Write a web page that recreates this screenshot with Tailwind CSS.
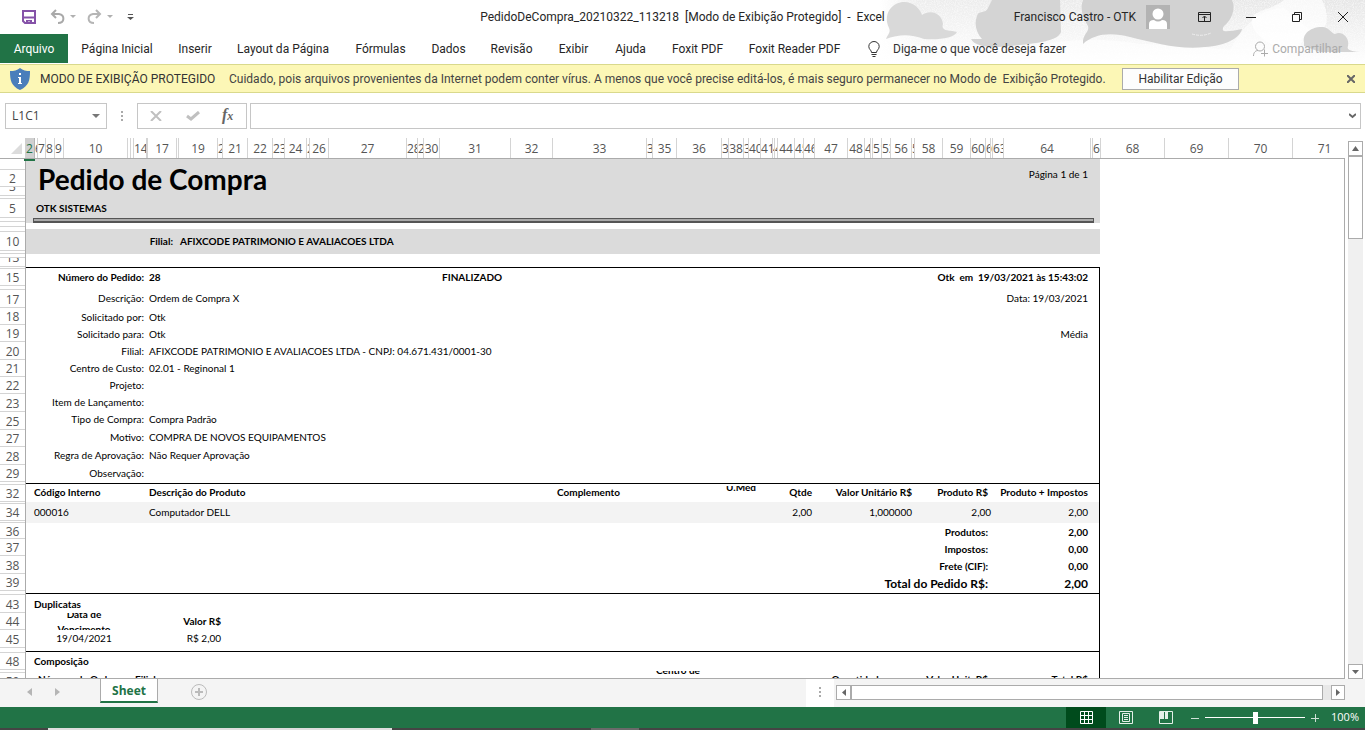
<!DOCTYPE html>
<html lang="pt-BR">
<head>
<meta charset="utf-8">
<title>PedidoDeCompra_20210322_113218 - Excel</title>
<script src="https://cdn.jsdelivr.net/npm/@tailwindcss/browser@4"></script>
</head>
<body class="h-screen overflow-hidden flex flex-col bg-white text-[#262626] text-xs font-['Open_Sans','Noto_Sans',sans-serif]">

<header class="relative shrink-0 h-16 font-['Roboto','Open_Sans',sans-serif]">
  <svg class="absolute right-0 top-0" width="485" height="64" viewBox="0 0 485 64" aria-hidden="true">
    <defs>
      <linearGradient id="fade" x1="0" x2="1"><stop offset="0" stop-color="#fff"/><stop offset=".08" stop-color="#ededed"/><stop offset="1" stop-color="#e6e6e6"/></linearGradient>
      <linearGradient id="down" x1="0" x2="0" y1="0" y2="1"><stop offset="0" stop-color="#fff" stop-opacity="0"/><stop offset="1" stop-color="#fff"/></linearGradient>
      <filter id="grain" x="0" y="0" width="1" height="1"><feTurbulence type="fractalNoise" baseFrequency=".9" numOctaves="2" seed="4"/><feColorMatrix values="0 0 0 0 1  0 0 0 0 1  0 0 0 0 1  2.500 0 0 0 -1"/></filter>
    </defs>
    <rect width="485" height="64" fill="url(#fade)"/>
    <rect width="485" height="64" fill="url(#down)"/>
    <path d="M40 64 Q90 34 150 48 Q200 34 260 44 Q300 44 350 50 Q372 8 404 8 L430 30 L400 64Z" fill="#fff" opacity=".5"/>
    <path d="M404 0 L442 0 C448 12 448 22 444 28 C430 34 420 40 418 52 C400 50 376 40 372 24 C370 8 390 12 404 0Z" fill="#fff" opacity=".7"/>
    <rect width="485" height="64" filter="url(#grain)" opacity=".6"/>
    <path d="M6 39 C8 34 11 32 9 28 C2 12 14 2 24 2 C34 2 40 9 42 15 C50 9 62 13 63 24 C60 32 72 30 77 32 C74 38 60 40 44 39 C30 34 20 34 6 39Z" fill="#d9d9d9"/>
    <path d="M97 16 C98 10 106 14 108 8 L112 0 L180 0 L181 32 C178 42 150 44 130 46 C110 49 94 46 91 39 L102 39 C96 32 94 24 97 16Z" fill="#d4d4d4"/>
    <path d="M203 0 L352 0 C356 8 352 20 344 26 C340 33 346 32 362 29 C360 38 345 46 325 47 C300 50 275 43 250 37 C230 32 214 34 203 44 C202 34 210 32 208 26 C202 16 200 8 203 0Z" fill="#d2d2d2"/>
    <path d="M312 34 Q322 37 331 33" fill="none" stroke="#eee" stroke-dasharray="3 1"/>
    <path d="M424 42 C422 32 434 26 443 27 C450 28 452 34 455 34 C462 30 470 38 468 46 C466 50 472 52 485 52 L440 52 L424 46Z" fill="#d4d4d4"/>
  </svg>

  <div class="relative h-[34px] flex items-center">
    <div class="flex-1 flex items-center h-8">
      <button class="ml-[21px]" aria-label="Salvar"><svg width="16" height="16" viewBox="0 0 16 16" fill="none"><path d="M2 2H14V14H4L2 12Z" stroke="#8552a8" stroke-width="2"/><path d="M2 8.5H14" stroke="#8552a8" stroke-width="2"/><path d="M5 11H11V15H9V12.500H7V15H5Z" fill="#8552a8"/></svg></button>
      <button class="ml-3" aria-label="Desfazer"><svg width="17" height="16" viewBox="0 0 17 16" fill="none" stroke="#a9a9a9" stroke-width="2"><path d="M7 1L3 5L7 9M3 5H10C16 6 16 14 9 14"/></svg></button>
      <svg class="ml-1" width="6" height="4" viewBox="0 0 6 4" aria-hidden="true"><path d="M0 0H6L3 3Z" fill="#b0b0b0"/></svg>
      <button class="ml-[10px]" aria-label="Refazer"><svg width="17" height="16" viewBox="0 0 17 16" fill="none" stroke="#b5b5b5" stroke-width="2"><path d="M10 1L14 5L10 9M14 5H7C1 6 1 14 8 14"/></svg></button>
      <svg class="ml-1" width="6" height="4" viewBox="0 0 6 4" aria-hidden="true"><path d="M0 0H6L3 3Z" fill="#b0b0b0"/></svg>
      <button class="ml-[14px]" aria-label="Personalizar Barra de Ferramentas"><svg width="7" height="8" viewBox="0 0 7 8"><path d="M1 1H6V2H1ZM0 4H7L3.500 7Z" fill="#555"/></svg></button>
    </div>
    <h1 class="whitespace-pre h-8 leading-8">PedidoDeCompra_20210322_113218  [Modo de Exibição Protegido]  -  Excel</h1>
    <div class="flex-1 flex items-center justify-end h-8">
      <span class="whitespace-nowrap">Francisco Castro - OTK</span>
      <svg class="ml-[10px]" width="24" height="24" viewBox="0 0 24 24" aria-hidden="true"><path d="M0 0H24V24H0Z" fill="#b3b3b3"/><circle cx="12" cy="9" r="5.500" fill="#fff"/><path d="M3 24V19Q3 15 8 15Q12 18 16 15Q21 15 21 19V24Z" fill="#fff"/></svg>
      <button class="ml-7" aria-label="Opções de Exibição da Faixa"><svg width="13" height="10" viewBox="0 0 13 10" fill="none" stroke="#222"><path d="M.5.5H12.500V9.500H.5ZM.5 2.500H12.500M6.500 9V4.500M4.500 6L6.500 4L8.500 6"/></svg></button>
      <button class="ml-[35px]" aria-label="Minimizar"><svg width="10" height="10" viewBox="0 0 10 10"><path d="M0 5.500H10" stroke="#222"/></svg></button>
      <button class="ml-9" aria-label="Restaurar"><svg width="10" height="10" viewBox="0 0 10 10" fill="none" stroke="#222"><path d="M.5 2.500H7.500V9.500H.5ZM2.500 2.500V.5H9.500V7.500H7.500"/></svg></button>
      <button class="ml-9 mr-[17px]" aria-label="Fechar"><svg width="10" height="10" viewBox="0 0 10 10" stroke="#222"><path d="M0 0L10 10M10 0L0 10"/></svg></button>
    </div>
  </div>

  <nav class="relative h-[29px] flex items-stretch whitespace-nowrap">
    <button class="w-[68px] bg-[#217346] text-white">Arquivo</button>
    <button class="w-[98px]">Página Inicial</button>
    <button class="w-[58px]">Inserir</button>
    <button class="w-[118px]">Layout da Página</button>
    <button class="w-[77px]">Fórmulas</button>
    <button class="w-[59px]">Dados</button>
    <button class="w-[67px]">Revisão</button>
    <button class="w-[57px]">Exibir</button>
    <button class="w-[57px]">Ajuda</button>
    <button class="w-[77px]">Foxit PDF</button>
    <button class="w-[117px]">Foxit Reader PDF</button>
    <label class="flex-1 flex items-center pl-[15px]">
      <svg width="12" height="16" viewBox="0 0 12 16" fill="none" stroke="#333"><path d="M3.500 11.500C3.500 9 .8 8.500.8 5.500A5.200 5 0 0 1 11.200 5.500C11.200 8.500 8.500 9 8.500 11.500ZM3.500 13.500H8.500M4.500 15.500H7.500"/></svg>
      <input class="ml-[13px] w-52 bg-transparent outline-none placeholder:text-[#333] placeholder:opacity-100" placeholder="Diga-me o que você deseja fazer" aria-label="Diga-me o que você deseja fazer">
    </label>
    <button class="flex items-center gap-1 pr-[23px] text-[#ababab]" disabled>
      <svg width="15" height="16" viewBox="0 0 15 16" fill="none" stroke="#ababab"><circle cx="7" cy="5.500" r="4.500"/><path d="M.5 15C.5 11 3 9.500 5 9.500M11.500 8.500V15.500M8 12.500H15"/></svg>
      Compartilhar
    </button>
  </nav>
</header>

<section class="shrink-0 h-[29px] flex items-center bg-[#fcf7b6] border-y border-[#d9d98c] text-[#444] whitespace-nowrap px-[10px] font-['Roboto','Open_Sans',sans-serif]">
  <svg width="20" height="22" viewBox="0 0 20 22" aria-hidden="true"><path d="M10 0C7 2.500 4 3 0 3C0 12 1 18 10 22C19 18 20 12 20 3C16 3 13 2.500 10 0Z" fill="#4a7ebb"/><path d="M9 5H11V7H9ZM8 9H11V15H12V16H8V15H9V10H8Z" fill="#fff"/></svg>
  <strong class="ml-[10px] w-[189px] font-normal text-[#333]">MODO DE EXIBIÇÃO PROTEGIDO</strong>
  <p class="w-[893px] whitespace-pre">Cuidado, pois arquivos provenientes da Internet podem conter vírus. A menos que você precise editá-los, é mais seguro permanecer no Modo de  Exibição Protegido.</p>
  <button class="w-[117px] h-[22px] bg-[#fdfdfd] border border-[#ababab] text-[#333]">Habilitar Edição</button>
  <button class="ml-auto" aria-label="Fechar aviso"><svg width="8" height="8" viewBox="0 0 8 8" stroke="#666" stroke-width="2"><path d="M0 0L8 8M8 0L0 8"/></svg></button>
</section>

<section class="shrink-0 h-[45px] flex items-center pl-[5px] pr-1">
  <div class="w-[102px] h-[26px] flex items-center border border-[#c6c6c6] pr-[6px]">
    <input class="w-full min-w-0 pl-[6px] outline-none text-[#444]" value="L1C1" aria-label="Caixa de nome">
    <svg class="shrink-0" width="8" height="4" viewBox="0 0 8 4" aria-hidden="true"><path d="M0 0H8L4 4Z" fill="#777"/></svg>
  </div>
  <svg class="ml-[14px]" width="2" height="10" viewBox="0 0 2 10" fill="#aaa" aria-hidden="true"><path d="M0 0H2V2H0ZM0 4H2V6H0ZM0 8H2V10H0Z"/></svg>
  <div class="ml-[14px] w-[110px] h-[26px] flex items-center border border-[#c6c6c6] px-3">
    <button aria-label="Cancelar"><svg width="12" height="10" viewBox="0 0 12 10" stroke="#c0c0c0" stroke-width="2"><path d="M1 0L11 10M11 0L1 10"/></svg></button>
    <button class="ml-6" aria-label="Inserir"><svg width="14" height="10" viewBox="0 0 14 10" fill="none" stroke="#c0c0c0" stroke-width="3"><path d="M1 5L5 8L13 1"/></svg></button>
    <button class="ml-[22px] font-['Liberation_Serif',serif] italic font-bold text-[#666] text-base leading-none" aria-label="Inserir Função"><i>f</i><i class="text-xs">x</i></button>
  </div>
  <div class="ml-[3px] flex-1 h-[26px] flex items-center border border-[#c6c6c6] pr-1">
    <input class="flex-1 min-w-0 bg-transparent outline-none" aria-label="Barra de fórmulas">
    <button aria-label="Expandir barra de fórmulas"><svg width="7" height="6" viewBox="0 0 7 6" fill="none" stroke="#666" stroke-width="2"><path d="M0 1L3.500 4L7 1"/></svg></button>
  </div>
</section>

<main class="flex-1 min-h-0 flex">
  <div class="flex-1 min-w-0 flex flex-col">
    <div class="shrink-0 h-[21px] flex border-b border-[#ababab]">
      <div class="w-[25px] shrink-0 flex justify-end items-end p-1 pr-[3px]"><svg width="11" height="11" viewBox="0 0 11 11" aria-hidden="true"><path d="M11 0V11H0Z" fill="#dcdcdc"/></svg></div>
      <div id="cols" class="flex-1 min-w-0 flex overflow-hidden border-l border-[#d0d0d0]"></div>
    </div>
    <div class="flex-1 min-h-0 flex overflow-hidden border-b border-[#ababab]">
      <div id="rows" class="w-[26px] shrink-0 border-r border-[#ababab]"></div>
      <div class="relative flex-1 min-w-0 text-[10px] text-black font-['Lato',sans-serif] whitespace-nowrap border-r border-[#ababab]">
        <i class="absolute -left-[2px] -top-[1px] w-[11px] h-[3px] bg-[#217346]"></i>
        <article class="w-[1074px]">
          <div class="h-16 bg-[#dbdbdb] flex flex-col">
            <div class="flex justify-between px-3">
              <h2 class="text-[28px] leading-10 font-bold">Pedido de Compra</h2>
              <span class="leading-[30px]">Página 1 de 1</span>
            </div>
            <div class="flex-1 pl-[10px] leading-[18px] font-bold">OTK SISTEMAS</div>
            <div class="h-[5px] shrink-0 ml-[7px] mr-[6px] border-t border-b-2 border-x border-[#555] bg-[#aaa]"></div>
          </div>
          <div class="mt-[6px] h-[25px] bg-[#dbdbdb] flex items-center font-bold"><span class="w-[147px] text-right">Filial:</span><span class="ml-[7px]">AFIXCODE PATRIMONIO E AVALIACOES LTDA</span></div>

          <div class="mt-[13px] border-t border-r border-black">
            <div class="h-5 flex items-center font-bold pr-[11px]"><span class="w-[118px] text-right">Número do Pedido:</span><span class="ml-[5px] w-[293px]">28</span><span>FINALIZADO</span><span class="ml-auto whitespace-pre">Otk  em  19/03/2021 às 15:43:02</span></div>
            <dl>
              <div class="h-[21px] flex items-center pr-[11px]"><dt class="w-[118px] text-right">Descrição:</dt><dd class="ml-[5px]">Ordem de Compra X</dd><dd class="ml-auto">Data: 19/03/2021</dd></div>
              <div class="h-[17px] flex items-center"><dt class="w-[118px] text-right">Solicitado por:</dt><dd class="ml-[5px]">Otk</dd></div>
              <div class="h-[17px] flex items-center pr-[11px]"><dt class="w-[118px] text-right">Solicitado para:</dt><dd class="ml-[5px]">Otk</dd><dd class="ml-auto">Média</dd></div>
              <div class="h-[17px] flex items-center"><dt class="w-[118px] text-right">Filial:</dt><dd class="ml-[5px]">AFIXCODE PATRIMONIO E AVALIACOES LTDA - CNPJ: 04.671.431/0001-30</dd></div>
              <div class="h-[17px] flex items-center"><dt class="w-[118px] text-right">Centro de Custo:</dt><dd class="ml-[5px]">02.01 - Reginonal 1</dd></div>
              <div class="h-[17px] flex items-center"><dt class="w-[118px] text-right">Projeto:</dt><dd></dd></div>
              <div class="h-[17px] flex items-center"><dt class="w-[118px] text-right">Item de Lançamento:</dt><dd></dd></div>
              <div class="h-[18px] flex items-center"><dt class="w-[118px] text-right">Tipo de Compra:</dt><dd class="ml-[5px]">Compra Padrão</dd></div>
              <div class="h-[18px] flex items-center"><dt class="w-[118px] text-right">Motivo:</dt><dd class="ml-[5px]">COMPRA DE NOVOS EQUIPAMENTOS</dd></div>
              <div class="h-[17px] flex items-center"><dt class="w-[118px] text-right">Regra de Aprovação:</dt><dd class="ml-[5px]">Não Requer Aprovação</dd></div>
              <div class="h-[19px] flex items-center"><dt class="w-[118px] text-right">Observação:</dt><dd></dd></div>
            </dl>
          </div>

          <table class="w-full table-fixed border-separate border-spacing-0 border-t border-r border-black">
            <colgroup><col class="w-[115px]"><col class="w-[335px]"><col class="w-[225px]"><col class="w-[80px]"><col class="w-[31px]"><col class="w-[100px]"><col class="w-[76px]"><col></colgroup>
            <thead><tr class="h-[18px] text-right">
              <th class="p-0 pl-2 text-left">Código Interno</th><th class="p-0 pl-2 text-left">Descrição do Produto</th><th class="p-0 text-center">Complemento</th>
              <th class="p-0 text-center align-bottom"><div class="h-4 overflow-hidden flex items-center justify-center leading-[13px]">U.Med<br>&nbsp;</div></th>
              <th class="p-0">Qtde</th><th class="p-0">Valor Unitário R$</th><th class="p-0">Produto R$</th><th class="p-0 pr-[11px]">Produto + Impostos</th>
            </tr></thead>
            <tbody><tr class="h-[21px] bg-[#f3f3f3] text-right">
              <td class="p-0 pl-2 text-left">000016</td><td class="p-0 pl-2 text-left">Computador DELL</td><td></td><td></td>
              <td class="p-0">2,00</td><td class="p-0">1,000000</td><td class="p-0"><span class="-mr-[3px]">2,00</span></td><td class="p-0 pr-[11px]">2,00</td>
            </tr></tbody>
            <tfoot class="text-right">
              <tr class="h-[17px] leading-4"><th colspan="7" class="p-0">Produtos:</th><td class="p-0 pr-[11px] font-bold">2,00</td></tr>
              <tr class="h-[17px] leading-4"><th colspan="7" class="p-0">Impostos:</th><td class="p-0 pr-[11px] font-bold">0,00</td></tr>
              <tr class="h-[17px] leading-4"><th colspan="7" class="p-0">Frete (CIF):</th><td class="p-0 pr-[11px] font-bold">0,00</td></tr>
              <tr class="h-[19px] text-xs leading-4"><th colspan="7" class="p-0">Total do Pedido R$:</th><td class="p-0 pr-[11px] font-bold">2,00</td></tr>
            </tfoot>
          </table>

          <section class="h-[58px] border-t border-r border-black">
            <h3 class="h-[19px] leading-[21px] pl-2 font-bold">Duplicatas</h3>
            <table class="table-fixed w-[195px]">
              <thead><tr class="h-[17px]"><th class="p-0 w-[116px]"><div class="h-[17px] overflow-hidden flex items-center justify-center leading-[15px]">Data de<br>Vencimento</div></th><th class="p-0 text-right">Valor R$</th></tr></thead>
              <tbody><tr class="h-[18px]"><td class="p-0 text-center">19/04/2021</td><td class="p-0 text-right">R$ 2,00</td></tr></tbody>
            </table>
          </section>

          <section class="border-t border-r border-black">
            <h3 class="h-[19px] leading-[19px] pl-2 font-bold">Composição</h3>
            <table class="table-fixed w-full">
              <thead><tr class="text-left leading-4 align-top">
                <th class="p-0 pl-3 w-[109px]">Número da Ordem</th><th class="p-0 w-[179px]">Filial</th><th class="p-0 leading-5 w-[276px]">Nome Justif.</th>
                <th class="p-0 w-[176px] text-center"><div class="h-4 overflow-hidden flex items-center justify-center leading-[17px]">Centro de<br>Custo</div></th>
                <th class="p-0 text-right w-[118px]">Quantidade</th><th class="p-0 text-right w-[104px]">Valor Unit. R$</th><th class="p-0 pr-[11px] text-right">Total R$</th>
              </tr></thead>
            </table>
          </section>
        </article>
      </div>
    </div>
  </div>
  <div class="w-5 shrink-0 pl-[3px] pr-[2px] pt-[3px] flex flex-col">
    <button class="h-[15px] border border-[#ababab] flex items-center justify-center" aria-label="Rolar para cima"><svg width="7" height="5" viewBox="0 0 7 5"><path d="M0 5H7L3.500 0Z" fill="#666"/></svg></button>
    <div class="flex-1 bg-[#f0f0f0]"><div class="h-[83px] border border-[#ababab] bg-white"></div></div>
    <button class="h-[15px] border border-[#ababab] flex items-center justify-center" aria-label="Rolar para baixo"><svg width="7" height="4" viewBox="0 0 7 4"><path d="M0 0H7L3.500 4Z" fill="#666"/></svg></button>
  </div>
</main>

<div class="shrink-0 h-7 flex bg-[#f4f4f4]">
  <div class="flex-1 flex">
    <div class="w-[100px] flex items-start gap-[23px] pl-[27px] pt-[9px]">
      <button aria-label="Planilha anterior"><svg class="block" width="5" height="8" viewBox="0 0 5 8"><path d="M5 0V8L0 4Z" fill="#b5b5b5"/></svg></button>
      <button aria-label="Próxima planilha"><svg class="block" width="5" height="8" viewBox="0 0 5 8"><path d="M0 0V8L5 4Z" fill="#b5b5b5"/></svg></button>
    </div>
    <button class="w-[58px] h-6 pt-[2px] bg-white border-x border-x-[#ababab] border-b-2 border-b-[#217346] text-[#217346] font-bold">Sheet</button>
    <button class="ml-[33px] mt-[5px] self-start" aria-label="Nova planilha"><svg class="block" width="16" height="16" viewBox="0 0 16 16" fill="none" stroke="#bbb"><circle cx="8" cy="8" r="7.500"/><path d="M8 4V12M4 8H12" stroke-width="2"/></svg></button>
  </div>
  <div class="w-7 bg-white flex justify-center pt-2"><svg width="2" height="10" viewBox="0 0 2 10" fill="#aaa" aria-hidden="true"><path d="M0 0H2V2H0ZM0 4H2V6H0ZM0 8H2V10H0Z"/></svg></div>
  <div class="w-[509px] mt-[6px] mr-5 ml-[2px] h-[15px] flex bg-[#e8e8e8]">
    <button class="w-[15px] bg-white border border-[#ababab] flex items-center justify-center" aria-label="Rolar para a esquerda"><svg width="4" height="7" viewBox="0 0 4 7"><path d="M4 0V7L0 3.500Z" fill="#666"/></svg></button>
    <div class="flex-1 bg-white border border-[#ababab] mr-2"></div>
    <button class="w-[14px] bg-white border border-[#ababab] flex items-center justify-center" aria-label="Rolar para a direita"><svg width="4" height="7" viewBox="0 0 4 7"><path d="M0 0V7L4 3.500Z" fill="#666"/></svg></button>
  </div>
</div>

<footer class="shrink-0 h-[23px] bg-[#217346] flex flex-col text-white">
  <div class="h-[21px] flex justify-end items-stretch">
    <button class="w-10 bg-[#004b1c] flex items-center justify-center" aria-label="Normal"><svg width="13" height="13" viewBox="0 0 13 13" fill="none" stroke="#fff"><path d="M.5.5H12.500V12.500H.5ZM4.500 0V13M8.500 0V13M0 4.500H13M0 8.500H13"/></svg></button>
    <button class="w-10 flex items-center justify-center" aria-label="Layout da Página"><svg width="14" height="13" viewBox="0 0 14 13" fill="none" stroke="#e5f0e9"><path d="M.5.5H13.500V12.500H.5ZM3.500 2.500H10.500V10.500H3.500ZM5 4.500H9M5 6.500H9M5 8.500H9"/></svg></button>
    <button class="w-10 flex items-center justify-center" aria-label="Visualização da Quebra de Página"><svg width="14" height="13" viewBox="0 0 14 13"><path d="M.5.5H13.500V12.500H.5Z" fill="none" stroke="#e5f0e9"/><path d="M1 1H5V8H1ZM6 1H9V8H6Z" fill="#e5f0e9"/></svg></button>
    <div class="ml-[5px] flex items-center gap-[6px]">
      <button aria-label="Reduzir"><svg class="block" width="8" height="8" viewBox="0 0 8 8"><path d="M0 4.500H8" stroke="#cfe0d6"/></svg></button>
      <div class="relative w-[100px] h-3 flex items-center">
        <span class="w-full h-px bg-white"></span>
        <span class="absolute left-12 top-0 w-[5px] h-3 bg-white"></span>
        <input type="range" min="10" max="400" value="100" class="absolute inset-0 w-full opacity-0" aria-label="Zoom">
      </div>
      <button aria-label="Ampliar"><svg class="block" width="8" height="8" viewBox="0 0 8 8"><path d="M0 4.500H8M4.500 0V8" stroke="#cfe0d6"/></svg></button>
    </div>
    <span class="w-[46px] pr-[6px] text-right text-[11px] leading-5">100%</span>
  </div>
  <div class="mt-auto h-[2px] bg-[#444] flex"><i class="ml-12 w-[344px] bg-[#dedede]"></i><i class="ml-[199px] w-12 bg-[#6a6a6a]"></i></div>
</footer>

<script>
  // Column header labels with their widths.
  const cols = [['2',9,1],['6',3],['7',8],['8',9],['9',9],['10',64],['',3],['',3],['14',13],['',1],['17',29],['',2],['19',39],['20',5],['21',25],['22',25],['23',12],['24',22],['25',3],['26',19],['27',78],['28',11],['29',6],['30',16],['31',71],['32',42],['33',94],['34',6],['35',24],['36',45],['37',7],['38',15],['39',5],['40',12],['41',12],['42',2],['43',3],['44',17],['45',9],['46',11],['47',33],['48',17],['49',6],['',2],['51',9],['53',9],['56',21],['57',3],['58',28],['59',28],['60',15],['61',5],['62',2],['63',11],['64',87],['',2],['66',8],['68',64],['69',64],['70',64],['71',64]];
  // Row header labels with their heights.
  const rows = [['',11],['2',17],['3',9],['',3],['5',19],['',4],['8',5],['',5],['10',19],['',3],['',4],['13',9],['',2],['15',17],['',4],['17',18],['18',17],['19',17],['20',18],['21',17],['22',17],['23',18],['25',18],['27',17],['28',18],['29',17],['',3],['32',17],['',2],['34',17],['',2],['36',16],['37',17],['38',18],['39',17],['',4],['43',18],['44',17],['45',18],['',5],['48',17],['',3],['50',17]];
  const wide = 'shrink-0 flex justify-center items-center pt-[2px] overflow-hidden border-r border-[#d4d4d4] text-[#555]';
  const narrow = 'shrink-0 flex justify-start items-center pt-[2px] overflow-hidden border-r border-[#d4d4d4] text-[#555]';
  const picked = 'shrink-0 flex justify-start items-center pt-[2px] overflow-hidden border-r border-[#b5b5b5] bg-[#d0d0d0] text-[#217346]';
  const tall = 'flex justify-center items-center pt-[2px] overflow-hidden border-b border-[#d4d4d4] text-[#555]';
  const low = 'flex justify-center items-end overflow-hidden border-b border-[#d4d4d4] text-[#555]';
  document.getElementById('cols').innerHTML = cols.map(([t, w, on]) => `<div class="${on ? picked : w < 14 ? narrow : wide}" style="width:${w}px">${t}</div>`).join('');
  document.getElementById('rows').innerHTML = rows.map(([t, h]) => `<div class="${h < 14 ? low : tall}" style="height:${h}px">${t}</div>`).join('');
</script>
</body>
</html>
